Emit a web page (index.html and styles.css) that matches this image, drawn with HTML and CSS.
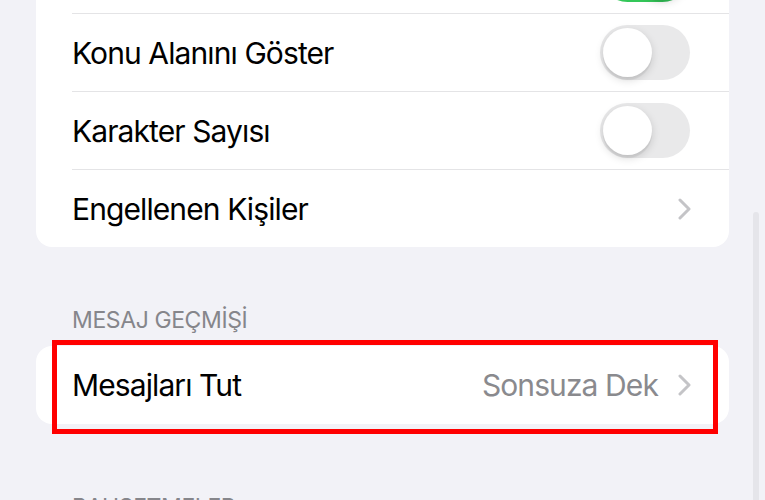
FILE: index.html
```html
<!DOCTYPE html>
<html lang="tr">
  <head>
    <meta charset="utf-8">
    <title>Mesajlar</title>
    <link rel="stylesheet" href="styles.css">
  </head>

  <body>
    <div class="list">
      <div class="card">
        <div class="row">
          <span class="label"></span>
          <span class="toggle on"><span class="knob"></span></span>
        </div>
        <div class="row">
          <span class="label">Konu Alanını Göster</span>
          <span class="toggle"><span class="knob"></span></span>
        </div>
        <div class="row">
          <span class="label">Karakter Sayısı</span>
          <span class="toggle"><span class="knob"></span></span>
        </div>
        <div class="row">
          <span class="label">Engellenen Kişiler</span>
          <span class="chevron"><svg width="13" height="22" viewBox="0 0 13 22"><path d="M2 2 L11 11 L2 20" fill="none" stroke="#c4c4c7" stroke-width="3" stroke-linecap="round" stroke-linejoin="round"/></svg></span>
        </div>
      </div>

      <div class="header first">MESAJ GEÇMİŞİ</div>
      <div class="card highlighted">
        <div class="row">
          <span class="label">Mesajları Tut</span>
          <span class="value">Sonsuza Dek</span>
          <span class="chevron"><svg width="13" height="22" viewBox="0 0 13 22"><path d="M2 2 L11 11 L2 20" fill="none" stroke="#c4c4c7" stroke-width="3" stroke-linecap="round" stroke-linejoin="round"/></svg></span>
        </div>
        <div class="marker"></div>
      </div>

      <div class="header second">BAHSETMELER</div>
    </div>
    <div class="scrollbar"></div>
  </body>
</html>
```

FILE: styles.css
```css
html, body {
  margin: 0;
  height: 100%;
  overflow: hidden;
}

body {
  background: #f2f2f7;
  font-family: Inter, "Noto Sans", sans-serif;
  color: #000;
}

.list {
  margin-top: -65px;
  padding: 0 36px;
}

.card {
  position: relative;
  background: #fff;
  border-radius: 16px;
}

.row {
  height: 78px;
  margin-left: 36px;
  padding-right: 39px;
  display: flex;
  align-items: center;
  border-top: 1px solid #e4e4e6;
  box-sizing: border-box;
}

.row:first-child {
  border-top: none;
}

.label {
  flex: 1;
  font-size: 30px;
  line-height: 1;
  letter-spacing: -0.9px;
}

.value {
  font-size: 30px;
  line-height: 1;
  letter-spacing: -0.9px;
  color: #8a8a8e;
  margin-right: 20px;
}

.chevron {
  display: flex;
  margin-right: -1px;
}

.toggle {
  width: 90px;
  height: 55px;
  border-radius: 28px;
  background: #e9e9ea;
  display: flex;
  align-items: center;
  padding: 0 3px;
  box-sizing: border-box;
}

.toggle.on {
  background: #34c759;
  justify-content: flex-end;
}

.knob {
  width: 49px;
  height: 49px;
  border-radius: 50%;
  background: #fff;
  box-shadow: 0 3px 8px rgba(0, 0, 0, 0.15), 0 3px 1px rgba(0, 0, 0, 0.06);
}

.header {
  font-size: 23px;
  line-height: 28px;
  letter-spacing: -0.4px;
  color: #86868b;
  padding-left: 36px;
}

.header.first {
  margin-top: 59px;
  margin-bottom: 12px;
}

.header.second {
  margin-top: 69px;
}

.marker {
  position: absolute;
  left: 16px;
  right: 11px;
  top: -6px;
  bottom: -10px;
  border: 5px solid #ff0000;
}

.scrollbar {
  position: absolute;
  left: 753px;
  top: 212px;
  width: 6px;
  height: 320px;
  border-radius: 3px;
  background: #e5e5ea;
}
```
